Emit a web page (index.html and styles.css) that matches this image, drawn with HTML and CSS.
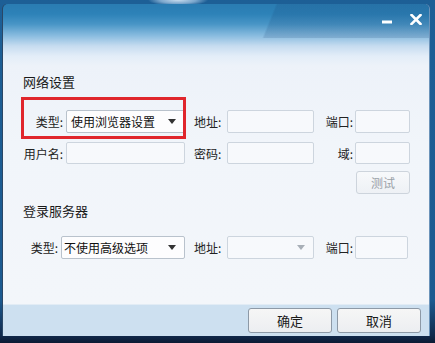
FILE: index.html
```html
<!DOCTYPE html>
<html lang="zh">
<head>
<meta charset="utf-8">
<link rel="stylesheet" href="styles.css">
</head>
<body>
<div class="window">
  <div class="titlebar">
    <svg class="ctl ctl-min" width="11" height="4" viewBox="0 0 11 4"><rect x="0" y="0.5" width="10" height="3" fill="#fff"/></svg>
    <svg class="ctl ctl-close" width="12" height="11" viewBox="0 0 12 11"><path d="M1.5 1 L10.5 10 M10.5 1 L1.5 10" stroke="#fff" stroke-width="2.6" stroke-linecap="square"/></svg>
  </div>
  <div class="content">
    <div class="section-title net-title">网络设置</div>
    <div class="row row1">
      <span class="lbl lbl1">类型:</span>
      <div class="select w1"><span>使用浏览器设置</span><i class="arrow"></i></div>
      <span class="lbl lbl2">地址:</span>
      <div class="input w2"></div>
      <span class="lbl lbl3">端口:</span>
      <div class="input w3"></div>
      <div class="highlight"></div>
    </div>
    <div class="row row2">
      <span class="lbl lbl1">用户名:</span>
      <div class="input w1"></div>
      <span class="lbl lbl2">密码:</span>
      <div class="input w2"></div>
      <span class="lbl lbl3">域:</span>
      <div class="input w3"></div>
    </div>
    <div class="test-row">
      <button class="btn-test">测试</button>
    </div>
    <div class="section-title login-title">登录服务器</div>
    <div class="row row3">
      <span class="lbl lbl1 short">类型:</span>
      <div class="select w1 wide"><span>不使用高级选项</span><i class="arrow"></i></div>
      <span class="lbl lbl2">地址:</span>
      <div class="select w2 disabled"><span></span><i class="arrow grey"></i></div>
      <span class="lbl lbl3">端口:</span>
      <div class="input w3 narrow"></div>
    </div>
  </div>
  <div class="footer">
    <button class="btn">确定</button>
    <button class="btn">取消</button>
  </div>
</div>
</body>
</html>
```
FILE: styles.css
```css
html, body {
  margin: 0;
  padding: 0;
}
body {
  width: 435px;
  height: 343px;
  overflow: hidden;
  background:
    radial-gradient(ellipse 30px 6px at 178px 0px, #c8dcee 0%, #7aa6cc 60%, rgba(40,100,160,0) 100%),
    linear-gradient(to bottom, #1d5f96 0px, #1c5a90 300px, #10284a 336px, #0b1a33 343px);
  font-family: "Noto Sans CJK SC", "Microsoft YaHei", sans-serif;
  font-size: 12px;
  color: #1e1e1e;
}
.window {
  position: relative;
  margin: 4px 0 0 3px;
  width: 426px;
  height: 332px;
  box-sizing: border-box;
  border-radius: 5px 5px 0 0;
  background:
    linear-gradient(112deg, rgba(0,0,0,0) 62%, rgba(20,60,110,0.16) 62.5%) top / 100% 34px no-repeat,
    linear-gradient(to bottom, #2a7cb2 0px, #2d82b8 10px, #4895c6 20px, #8bbde0 32px, #c6dcf0 42px, #e3edf8 52px, #edf2f9 62px, #f1f5fa 140px, #f3f6fa 300px);
  display: flex;
  flex-direction: column;
  box-shadow: -1px 0 0 #2a4766, 1px 0 0 #6c94ba;
}
.titlebar {
  height: 56px;
  flex: none;
  position: relative;
}
.ctl {
  position: absolute;
  display: block;
}
.ctl-min { left: 379px; top: 16px; }
.ctl-close { left: 407px; top: 10px; }

.content {
  flex: 1;
  padding-left: 20px;
  display: flex;
  flex-direction: column;
}
.section-title {
  font-size: 13px;
  line-height: 16px;
  color: #1a1a1a;
}
.net-title { margin-top: 14px; }
.row {
  display: flex;
  align-items: center;
  height: 23px;
  position: relative;
}
.row1 { margin-top: 20px; }
.row2 { margin-top: 9px; height: 22px; }
.row3 { margin-top: 17px; }
.lbl {
  flex: none;
  white-space: nowrap;
  color: #222;
  font-size: 12px;
}
.lbl1 { width: 40px; text-align: right; margin-right: 3px; }
.lbl1.short { width: 35px; }
.lbl2 { width: 33px; margin-left: 9px; text-align: left; }
.lbl3 { width: 28px; margin-left: 11px; margin-right: 2px; text-align: right; }
.input, .select {
  flex: none;
  height: 100%;
  box-sizing: border-box;
  border: 1px solid #cdd5de;
  border-radius: 2px;
  background: #f7f9fc;
}
.w1 { width: 119px; }
.w1.wide { width: 124px; }
.w2 { width: 87px; }
.w3 { width: 55px; }
.w3.narrow { width: 53px; }
.select {
  display: flex;
  align-items: center;
  justify-content: space-between;
  padding: 0 8px 0 4px;
  background: #fdfdfe;
  border-color: #b9c2cc;
  color: #111;
}
.select.wide { padding-left: 2px; }
.select.disabled {
  background: #f7f9fc;
  border-color: #cdd5de;
}
.arrow {
  width: 0;
  height: 0;
  border-left: 4px solid transparent;
  border-right: 4px solid transparent;
  border-top: 5px solid #333;
}
.arrow.grey { border-top-color: #a8afb7; }
.highlight {
  position: absolute;
  left: -2px;
  top: -13px;
  width: 165px;
  height: 42px;
  box-sizing: border-box;
  border: 3px solid #e0262c;
}
.test-row {
  display: flex;
  justify-content: flex-end;
  padding-right: 19px;
  margin-top: 7px;
}
.btn-test {
  width: 54px;
  height: 23px;
  box-sizing: border-box;
  border: 1px solid #cdd4dc;
  border-radius: 3px;
  background: linear-gradient(#f7f9fb, #eef1f5);
  color: #9aa1a8;
  font-family: inherit;
  font-size: 12px;
  padding: 0;
}
.login-title { margin-top: 9px; }
.footer {
  flex: none;
  height: 32px;
  background: #cde0f0;
  border-top: 1px solid #e2ecf5;
  box-sizing: border-box;
  display: flex;
  justify-content: flex-end;
  align-items: center;
  gap: 5px;
  padding: 0 8px 0 0;
}
.btn {
  width: 84px;
  height: 25px;
  box-sizing: border-box;
  border: 1px solid #8d99a6;
  border-radius: 3px;
  background: linear-gradient(#f6f6f6, #eceef1);
  font-family: inherit;
  font-size: 13px;
  color: #1a1a1a;
  padding: 0;
}
```
